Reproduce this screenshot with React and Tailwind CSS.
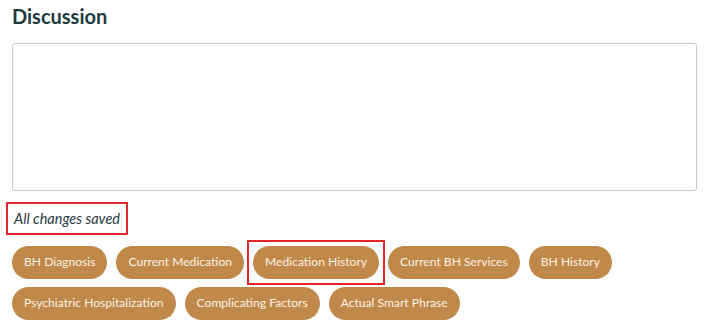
import React from 'react'

const tags = [
  'BH Diagnosis',
  'Current Medication',
  'Medication History',
  'Current BH Services',
  'BH History',
  'Psychiatric Hospitalization',
  'Complicating Factors',
  'Actual Smart Phrase',
]

function Tag({ label }) {
  return (
    <button className="h-[33px] px-[12px] rounded-full bg-[#c0894a] text-[12.1px] text-[#fbf1e4] leading-none">
      {label}
    </button>
  )
}

export default function App() {
  return (
    <div className="w-[720px] h-[332px] bg-white px-3 pt-[3px] font-['Lato','Noto_Sans',sans-serif]">
      <h2 className="text-[20px] font-bold text-[#1d3a3f] leading-[26px]">Discussion</h2>
      <textarea className="mt-[14px] block w-[685px] h-[148px] border border-[#c8c8c8] rounded-[3px] resize-none outline-none" />
      <div className="mt-[11px] -ml-[6px] inline-block border-2 border-[#e3262b] px-[6px] py-[5px]">
        <span className="block text-[14.5px] italic text-[#2b3a44] leading-[19px]">All changes saved</span>
      </div>
      <div className="mt-[11px] flex flex-wrap gap-x-[9px] gap-y-[8px]">
        {tags.map((t) =>
          t === 'Medication History' ? (
            <div key={t} className="flex outline-2 outline-[#e3262b] outline-offset-4">
              <Tag label={t} />
            </div>
          ) : (
            <Tag key={t} label={t} />
          )
        )}
      </div>
    </div>
  )
}
